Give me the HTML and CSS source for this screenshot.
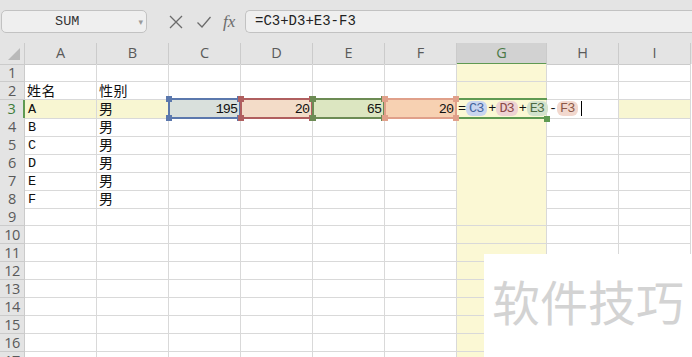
FILE: index.html
```html
<!DOCTYPE html>
<html lang="zh">
<head>
  <meta charset="UTF-8">
  <title>SUM</title>
  <link rel="stylesheet" href="styles.css">
</head>
<body>
  <div class="toolbar">
    <div class="name-box">
      <span class="name">SUM</span>
      <span class="drop">&#9662;</span>
    </div>
    <div class="tools">
      <svg class="tool" viewBox="0 0 16 16" width="16" height="16"><path d="M2 2 L14 14 M14 2 L2 14" stroke="#6b6b6b" stroke-width="1.3" fill="none"/></svg>
      <svg class="tool" viewBox="0 0 16 16" width="16" height="16"><path d="M1.5 8.5 L6 13 L14.5 3" stroke="#6b6b6b" stroke-width="1.3" fill="none"/></svg>
      <span class="fx">fx</span>
    </div>
    <div class="formula">=C3+D3+E3-F3</div>
  </div>

  <div class="sheet">
    <div class="row head">
      <div class="corner"><span class="tri"></span></div>
      <div>A</div><div>B</div><div>C</div><div>D</div><div>E</div><div>F</div><div class="sel">G</div><div>H</div><div>I</div>
    </div>
    <div class="row"><div class="rh">1</div><div></div><div></div><div></div><div></div><div></div><div></div><div></div><div></div><div></div></div>
    <div class="row"><div class="rh">2</div><div class="zh">姓名</div><div class="zh">性别</div><div></div><div></div><div></div><div></div><div></div><div></div><div></div></div>
    <div class="row cur">
      <div class="rh">3</div>
      <div class="txt">A</div>
      <div class="zh">男</div>
      <div class="num ref ref-c">195</div>
      <div class="num ref ref-d">20</div>
      <div class="num ref ref-e">65</div>
      <div class="num ref ref-f">20</div>
      <div class="active">
        <div class="editor">=<span class="tk tk-c">C3</span>+<span class="tk tk-d">D3</span>+<span class="tk tk-e">E3</span>-<span class="tk tk-f">F3</span><span class="caret"></span></div>
      </div>
      <div class="blank"></div>
      <div></div>
    </div>
    <div class="row"><div class="rh">4</div><div class="txt">B</div><div class="zh">男</div><div></div><div></div><div></div><div></div><div></div><div></div><div></div></div>
    <div class="row"><div class="rh">5</div><div class="txt">C</div><div class="zh">男</div><div></div><div></div><div></div><div></div><div></div><div></div><div></div></div>
    <div class="row"><div class="rh">6</div><div class="txt">D</div><div class="zh">男</div><div></div><div></div><div></div><div></div><div></div><div></div><div></div></div>
    <div class="row"><div class="rh">7</div><div class="txt">E</div><div class="zh">男</div><div></div><div></div><div></div><div></div><div></div><div></div><div></div></div>
    <div class="row"><div class="rh">8</div><div class="txt">F</div><div class="zh">男</div><div></div><div></div><div></div><div></div><div></div><div></div><div></div></div>
    <div class="row"><div class="rh">9</div><div></div><div></div><div></div><div></div><div></div><div></div><div></div><div></div><div></div></div>
    <div class="row"><div class="rh">10</div><div></div><div></div><div></div><div></div><div></div><div></div><div></div><div></div><div></div></div>
    <div class="row"><div class="rh">11</div><div></div><div></div><div></div><div></div><div></div><div></div><div></div><div></div><div></div></div>
    <div class="row"><div class="rh">12</div><div></div><div></div><div></div><div></div><div></div><div></div><div></div><div></div><div></div></div>
    <div class="row"><div class="rh">13</div><div></div><div></div><div></div><div></div><div></div><div></div><div></div><div></div><div></div></div>
    <div class="row"><div class="rh">14</div><div></div><div></div><div></div><div></div><div></div><div></div><div></div><div></div><div></div></div>
    <div class="row"><div class="rh">15</div><div></div><div></div><div></div><div></div><div></div><div></div><div></div><div></div><div></div></div>
    <div class="row"><div class="rh">16</div><div></div><div></div><div></div><div></div><div></div><div></div><div></div><div></div><div></div></div>
    <div class="row"><div class="rh">17</div><div></div><div></div><div></div><div></div><div></div><div></div><div></div><div></div><div></div></div>
  </div>

  <div class="watermark">软件技巧</div>
</body>
</html>
```

FILE: styles.css
```css
body {
  margin: 0;
  width: 692px;
  height: 357px;
  overflow: hidden;
  background: #fff;
  font-family: "Liberation Mono", "Noto Sans CJK SC", monospace;
  position: relative;
}
.toolbar {
  height: 43px;
  background: #e4e4e4;
  display: flex;
  align-items: center;
}
.name-box {
  width: 146px;
  height: 23px;
  margin-left: 1px;
  box-sizing: border-box;
  border: 1px solid #c2c2c2;
  border-radius: 5px;
  background: #efefef;
  display: flex;
  align-items: center;
}
.name {
  flex: 1;
  text-align: center;
  font-size: 13.5px;
  color: #333;
  padding-right: 6px;
}
.drop {
  font-size: 9px;
  color: #9a9a9a;
  margin-right: 3px;
  font-family: "DejaVu Sans", sans-serif;
}
.tools {
  display: flex;
  align-items: center;
  gap: 12px;
  margin-left: 21px;
  width: 77px;
}
.tool {
  display: block;
}
.fx {
  font-family: "Liberation Serif", serif;
  font-style: italic;
  font-size: 17px;
  color: #6b6b6b;
  margin-left: -1px;
}
.formula {
  flex: 1;
  height: 23px;
  box-sizing: border-box;
  border: 1px solid #c2c2c2;
  border-right: none;
  border-radius: 5px 0 0 5px;
  background: #efefef;
  font-size: 14px;
  color: #222;
  padding-left: 9px;
  line-height: 21px;
}
.sheet {
  display: flex;
  flex-direction: column;
}
.row {
  display: grid;
  grid-template-columns: 25px repeat(6, 72px) 90px 72px 72px;
  height: 18px;
  flex-shrink: 0;
}
.row > div {
  box-sizing: border-box;
  border-right: 1px solid #d9d9d9;
  border-bottom: 1px solid #d9d9d9;
  font-size: 13.5px;
  letter-spacing: -1px;
  line-height: 17px;
  padding-top: 1px;
  color: #111;
  white-space: nowrap;
}
.row > div:nth-child(8) {
  background: #fbf8d4;
}
.row.head {
  height: 21px;
  background: #e4e4e4;
}
.row.head > div {
  font-family: "Open Sans", "Noto Sans", sans-serif;
  font-size: 14.5px;
  letter-spacing: 0;
  line-height: 20px;
  padding-top: 0;
  color: #5a5a5a;
  text-align: center;
  border-right-color: #cbcbcb;
  border-bottom-color: #cbcbcb;
}
.row.head > .sel {
  background: #d2d2d2;
  color: #4b7a47;
  border-bottom: 2px solid #5f9a52;
}
.corner {
  position: relative;
}
.tri {
  position: absolute;
  right: 4px;
  bottom: 4px;
  width: 0;
  height: 0;
  border-left: 12px solid transparent;
  border-bottom: 12px solid #b9b9b9;
}
.row > .rh {
  background: #e4e4e4;
  font-family: "Open Sans", "Noto Sans", sans-serif;
  font-size: 14.5px;
  line-height: 17px;
  padding-top: 0;
  color: #5a5a5a;
  text-align: center;
  letter-spacing: -0.5px;
  border-right-color: #cbcbcb;
  border-bottom-color: #cbcbcb;
}
.row > .zh {
  font-family: "Noto Sans CJK SC", sans-serif;
  font-size: 14px;
  letter-spacing: 0.5px;
  line-height: 17px;
  padding: 0 0 0 2px;
}
.txt {
  padding-left: 3px;
}
.num {
  text-align: right;
  padding-right: 3px;
}
/* current row */
.cur > div {
  background: #f8f6d2;
}
.cur > .rh {
  color: #3f7d3a;
  border-right: 2px solid #5f9a52;
}
.cur > .blank {
  background: #fff;
}
.ref {
  position: relative;
}
.ref::before {
  content: "";
  position: absolute;
  left: -1px;
  top: -2px;
  right: -1px;
  bottom: -1px;
  border: 2px solid var(--line);
}
.ref::after {
  content: "";
  position: absolute;
  left: -3px;
  top: -4px;
  right: -3px;
  bottom: -3px;
  background:
    linear-gradient(var(--line), var(--line)) left top / 6px 6px no-repeat,
    linear-gradient(var(--line), var(--line)) right top / 6px 6px no-repeat,
    linear-gradient(var(--line), var(--line)) left bottom / 6px 6px no-repeat,
    linear-gradient(var(--line), var(--line)) right bottom / 6px 6px no-repeat;
  z-index: 2;
}
.row > .ref-c { background: #d9e0dc; --line: #5b78ad; }
.row > .ref-d { background: #f3dcc8; --line: #b05f5f; }
.row > .ref-e { background: #dce6c1; --line: #6c8b54; }
.row > .ref-f { background: #f7d1b2; --line: #e0a08a; }
.row > .active {
  background: #fff;
  position: relative;
  overflow: visible;
}
.active::before {
  content: "";
  position: absolute;
  left: 0;
  right: -1px;
  top: -2px;
  bottom: -1px;
  border-top: 2px solid #5f9a52;
  border-bottom: 2px solid #5f9a52;
}
.active::after {
  content: "";
  position: absolute;
  right: -4px;
  bottom: -4px;
  width: 6px;
  height: 6px;
  background: #5f9a52;
  z-index: 3;
}
.editor {
  position: absolute;
  left: 1px;
  top: 0;
  height: 17px;
  display: flex;
  align-items: center;
  font-size: 13.5px;
  letter-spacing: -1px;
  color: #111;
  z-index: 4;
}
.tk {
  padding: 0 4px 0 3px;
  margin: 0 1px;
  border-radius: 6px;
  line-height: 15px;
}
.tk-c { background: #c9d5ef; color: #44649c; }
.tk-d { background: #eed3d3; color: #8b4848; }
.tk-e { background: #d3e2cd; color: #4d6a42; }
.tk-f { background: #f2d8ce; color: #8b5848; }
.caret {
  width: 1px;
  height: 15px;
  background: #000;
  margin-left: 2px;
}
.watermark {
  position: absolute;
  left: 484px;
  top: 254px;
  width: 208px;
  height: 103px;
  background: #fff;
  font-family: "Noto Sans CJK SC", sans-serif;
  font-size: 48px;
  color: #d3d3d3;
  text-align: center;
  line-height: 92px;
}
```
